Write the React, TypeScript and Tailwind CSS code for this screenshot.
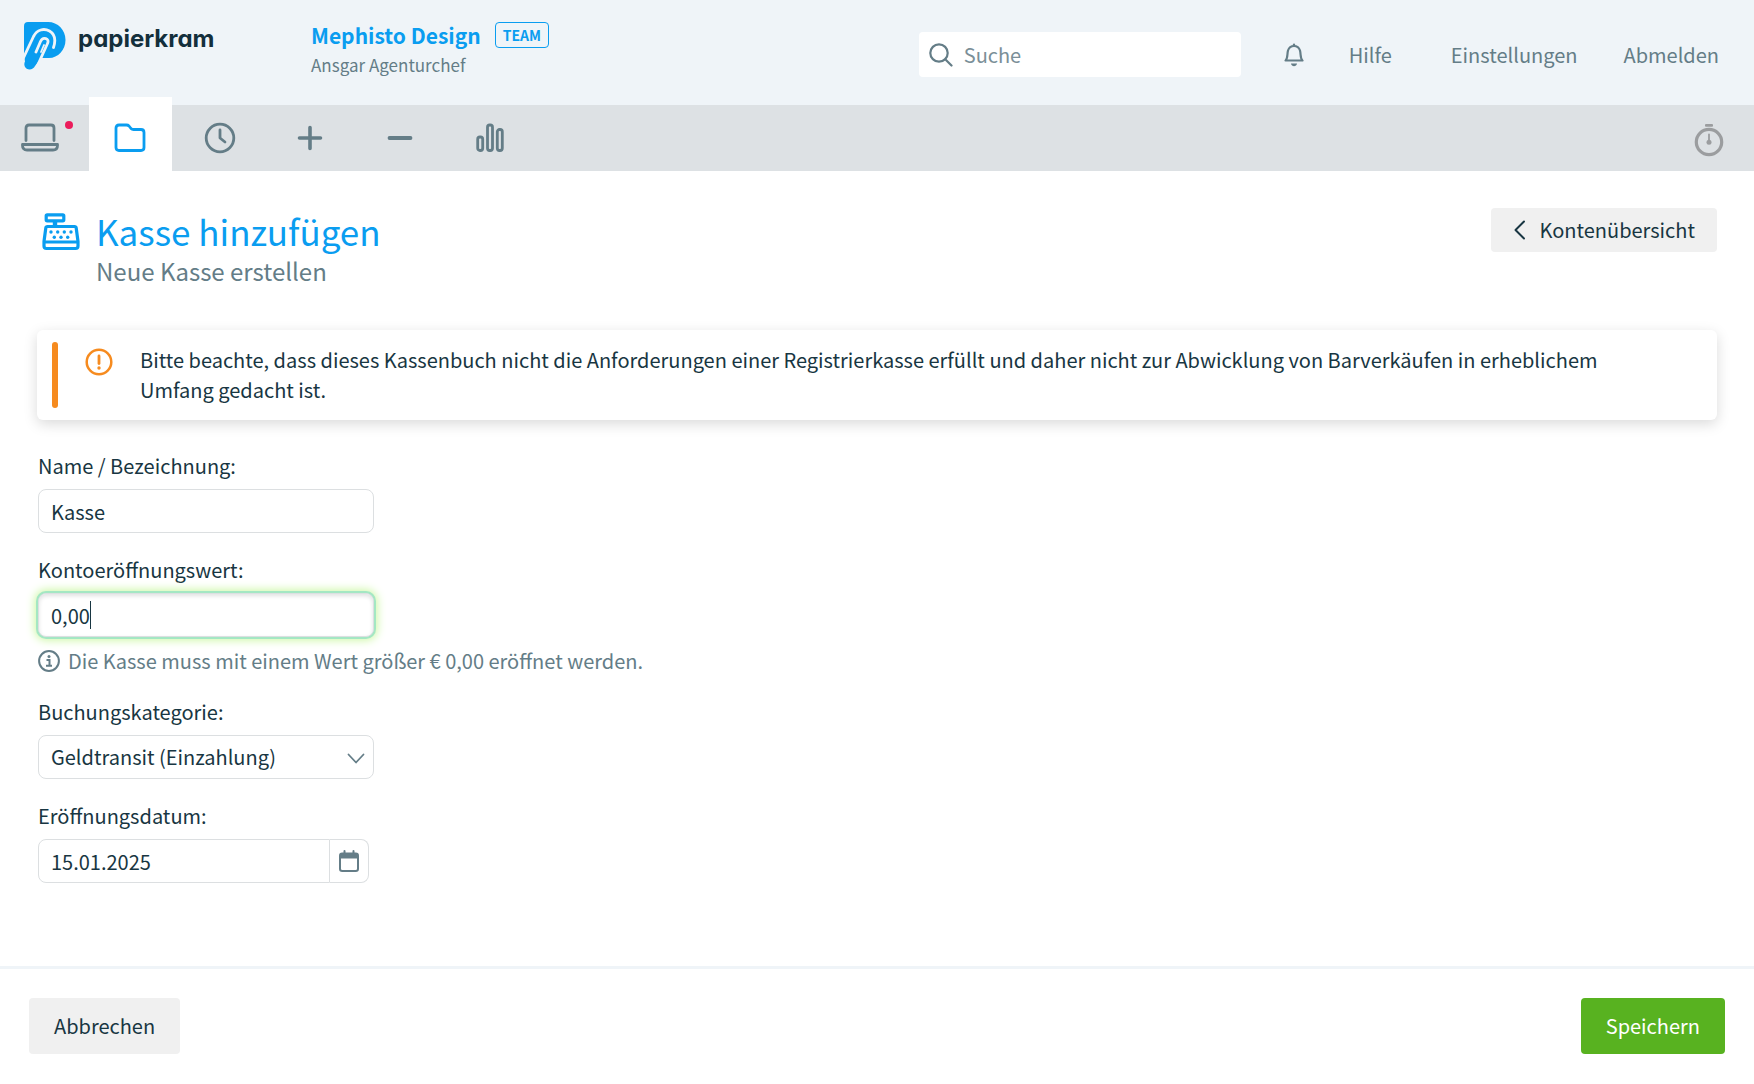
import React, { useEffect, useRef, useState } from "react";

const line = {
  fill: "none",
  stroke: "currentColor",
  strokeLinecap: "round" as const,
  strokeLinejoin: "round" as const,
  "aria-hidden": true,
};

function LogoMark() {
  return (
    <svg width="42" height="48" viewBox="0 0 42 48" aria-hidden="true">
      <path
        d="M4 0H24C34 0 41.500 8 41.500 18S34 36 25 36H17L11 44C9 48.500 2.500 48.500 .8 44.500C0 42.500 .3 41 1 39.500L0 33V4Q0 0 4 0Z"
        fill="#0a9df0"
      />
      <g fill="none" stroke="#eff4f8" strokeWidth="2.8" strokeLinecap="round">
        <path d="M-2 39L9.500 14.500C13 7.500 20 6 25.500 9C30.500 12 32 18 29.500 25.500" />
        <path d="M12 30L16.500 19.500C19 14 26 16.500 23.500 21.500L12 47" />
        <path d="M17 30L20 23" strokeWidth="1.800" />
      </g>
    </svg>
  );
}

function LaptopIcon() {
  return (
    <svg width="38" height="30" viewBox="0 0 38 30" strokeWidth="2.8" {...line}>
      <path d="M5 17.500V5Q5 2 8 2H30Q33 2 33 5V17.500" />
      <path d="M1.500 21.500H36.500V22.500Q36.500 27 32 27H6Q1.500 27 1.500 22.500Z" />
    </svg>
  );
}

function FolderIcon() {
  return (
    <svg width="32" height="30" viewBox="0 0 32 30" strokeWidth="2.8" {...line}>
      <path d="M2 5Q2 2 5 2H12.500Q14 2 15 3L17 5.500Q18 6.500 19.500 6.500H27Q30 6.500 30 9.500V24.500Q30 27.500 27 27.500H5Q2 27.500 2 24.500Z" />
    </svg>
  );
}

function ClockIcon() {
  return (
    <svg width="32" height="32" viewBox="0 0 32 32" strokeWidth="2.8" {...line}>
      <circle cx="16" cy="16" r="13.800" />
      <path d="M16 8V16L21 20" />
    </svg>
  );
}

function PlusIcon() {
  return (
    <svg width="26" height="26" viewBox="0 0 26 26" strokeWidth="3.6" {...line}>
      <path d="M2.500 13H23.500M13 2.500V23.500" />
    </svg>
  );
}

function MinusIcon() {
  return (
    <svg width="26" height="26" viewBox="0 0 26 26" strokeWidth="3.800" {...line}>
      <path d="M2.500 13H23.500" />
    </svg>
  );
}

function BarsIcon() {
  return (
    <svg width="28" height="30" viewBox="0 0 28 30" strokeWidth="2.8" {...line}>
      <rect x="1.700" y="14" width="5" height="13.500" rx="2.200" />
      <rect x="11.500" y="2" width="5" height="25.500" rx="2.200" />
      <rect x="21.300" y="6.500" width="5" height="21" rx="2.200" />
    </svg>
  );
}

function StopwatchIcon() {
  return (
    <svg width="30" height="34" viewBox="0 0 30 34" aria-hidden="true">
      <rect x="11" y="1" width="8" height="2.800" rx="1" fill="#9b9d9f" />
      <circle cx="15" cy="19" r="12.700" fill="none" stroke="#9b9d9f" strokeWidth="3.200" />
      <path d="M15 11.500V19" stroke="#9b9d9f" strokeWidth="1.800" strokeLinecap="round" />
      <circle cx="15" cy="19.300" r="2.500" fill="#9b9d9f" />
    </svg>
  );
}

function SearchIcon() {
  return (
    <svg width="24" height="24" viewBox="0 0 24 24" strokeWidth="2.2" {...line}>
      <circle cx="10" cy="10" r="8.700" />
      <path d="M16.500 16.500L22.500 22.500" />
    </svg>
  );
}

function BellIcon() {
  return (
    <svg width="20" height="24" viewBox="0 0 20 24" strokeWidth="2.2" {...line}>
      <path d="M1.500 17.500C4 15.500 3 11 4 7.500C5 4.500 7.500 3 10 3S15 4.500 16 7.500C17 11 16 15.500 18.500 17.500Z" />
      <path d="M10 1.500V3" />
      <path d="M7 20.500H13C12.500 24 7.500 24 7 20.500Z" fill="currentColor" stroke="none" />
    </svg>
  );
}

function RegisterIcon() {
  return (
    <svg width="38" height="38" viewBox="0 0 38 38" aria-hidden="true">
      <g fill="none" stroke="#0a9df0" strokeWidth="3.2" strokeLinejoin="round">
        <rect x="4.200" y="1.800" width="17.600" height="6" rx="1" />
        <path d="M13 8V13" strokeWidth="4.400" />
        <path d="M5.500 13.500H32.500Q34 13.500 34.200 15L36 28.500V33Q36 35.500 33.500 35.500H4.500Q2 35.500 2 33V28.500L3.800 15Q4 13.500 5.500 13.500Z" />
        <path d="M2 29H36" strokeWidth="3" />
      </g>
      <g fill="#0a9df0">
        <circle cx="9" cy="19" r="1.700" />
        <circle cx="15.700" cy="19" r="1.700" />
        <circle cx="22.300" cy="19" r="1.700" />
        <circle cx="29" cy="19" r="1.700" />
        <circle cx="12.300" cy="24.200" r="1.700" />
        <circle cx="19" cy="24.200" r="1.700" />
        <circle cx="25.700" cy="24.200" r="1.700" />
      </g>
    </svg>
  );
}

function WarningIcon() {
  return (
    <svg width="28" height="28" viewBox="0 0 28 28" aria-hidden="true">
      <circle cx="14" cy="14" r="12.300" fill="none" stroke="#f68b1f" strokeWidth="2.500" />
      <path d="M14 8V15.500" stroke="#f68b1f" strokeWidth="2.800" strokeLinecap="round" />
      <circle cx="14" cy="20" r="1.700" fill="#f68b1f" />
    </svg>
  );
}

function InfoIcon() {
  return (
    <svg width="22" height="22" viewBox="0 0 22 22" aria-hidden="true">
      <circle cx="11" cy="11" r="9.900" fill="none" stroke="currentColor" strokeWidth="2" />
      <circle cx="11" cy="6.600" r="1.500" fill="currentColor" />
      <path d="M8.500 10H11.500V15.500M8 15.800H14" fill="none" stroke="currentColor" strokeWidth="2" />
    </svg>
  );
}

function CalendarIcon() {
  return (
    <svg width="20" height="22" viewBox="0 0 20 22" aria-hidden="true">
      <rect x="1" y="3.500" width="18" height="17.500" rx="2.200" fill="none" stroke="currentColor" strokeWidth="2" />
      <path d="M1 4H19V8.500H1Z" fill="currentColor" />
      <path d="M5.500 1V5M14.500 1V5" stroke="currentColor" strokeWidth="2" strokeLinecap="round" />
    </svg>
  );
}

const tabs = [
  { label: "Übersicht", icon: <LaptopIcon />, notice: true },
  { label: "Projekte", icon: <FolderIcon />, active: true },
  { label: "Zeiterfassung", icon: <ClockIcon /> },
  { label: "Einnahmen", icon: <PlusIcon /> },
  { label: "Ausgaben", icon: <MinusIcon /> },
  { label: "Auswertungen", icon: <BarsIcon /> },
];

function Header() {
  return (
    <header className="flex h-[105px] items-start bg-[#eff4f8] pr-[35px] pl-6 text-[#647d87]">
      <a href="#" className="flex w-[287px] shrink-0 gap-3 pt-[22px]">
        <LogoMark />
        <span className="pt-px font-[family-name:Inter] text-2xl leading-8 font-bold text-[#132f3c] [font-feature-settings:'cv11']">
          papierkram
        </span>
      </a>
      <div className="pt-5">
        <div className="flex items-center gap-[14px]">
          <a href="#" className="text-[21px] leading-[30px] font-bold text-[#0a9df0]">
            Mephisto Design
          </a>
          <span className="rounded border border-[#0a9df0] px-[7px] text-sm leading-6 font-bold text-[#0a9df0]">
            TEAM
          </span>
        </div>
        <div className="text-[17px] leading-[30px]">Ansgar Agenturchef</div>
      </div>
      <form className="mt-8 ml-auto flex h-[45px] w-[322px] items-center gap-[11px] rounded bg-white px-2.5">
        <label htmlFor="search" aria-label="Suche">
          <SearchIcon />
        </label>
        <input
          id="search"
          placeholder="Suche"
          className="min-w-0 flex-1 bg-transparent outline-none placeholder:text-[#7b8f98]"
        />
      </form>
      <div className="mt-[42px] flex leading-[26px]">
        <button aria-label="Benachrichtigungen" className="mr-[45px] ml-[43px]">
          <BellIcon />
        </button>
        <a href="#" className="mr-[59px]">Hilfe</a>
        <a href="#" className="mr-[46px]">Einstellungen</a>
        <a href="#">Abmelden</a>
      </div>
    </header>
  );
}

function TabBar() {
  return (
    <nav className="flex h-[66px] items-end bg-[#dde1e4] pr-[30px] text-[#647d87]">
      <ul className="flex items-end gap-[7px]">
        {tabs.map((tab) => (
          <li key={tab.label} className={tab.notice ? "w-[82px]" : "w-[83px]"}>
            <a
              href="#"
              aria-label={tab.label}
              className={
                tab.active
                  ? "flex h-[74px] items-center justify-center bg-white pt-2 pr-0.5 text-[#0a9df0]"
                  : "relative flex h-[66px] items-center justify-center pr-0.5"
              }
            >
              {tab.icon}
              {tab.notice && <span className="absolute top-4 right-[9px] size-2 rounded-full bg-[#eb1c5b]" />}
            </a>
          </li>
        ))}
      </ul>
      <button aria-label="Stoppuhr" className="mb-[14px] ml-auto">
        <StopwatchIcon />
      </button>
    </nav>
  );
}

const field = "h-11 rounded-lg border border-[#dcdfe1] bg-white px-3";

export default function App() {
  const amount = useRef<HTMLInputElement>(null);
  const [value, setValue] = useState("0,00");
  useEffect(() => amount.current?.focus(), []);

  return (
    <div className="flex min-h-screen flex-col bg-white font-['Noto_Sans_CJK_SC',sans-serif] text-xl leading-[30px] text-[#183642]">
      <Header />
      <TabBar />
      <main className="flex-1 px-[37px] pt-[37px]">
        <div className="flex items-start">
          <div className="flex gap-4 pl-[5px]">
            <div className="pt-[5px]">
              <RegisterIcon />
            </div>
            <div>
              <h1 className="text-[35px] leading-[46px] text-[#0a9df0]">Kasse hinzufügen</h1>
              <p className="text-2xl leading-[34px] text-[#647d87]">Neue Kasse erstellen</p>
            </div>
          </div>
          <a href="#" className="ml-auto flex h-11 items-center gap-[13px] rounded bg-[#f0f0f0] px-[22px]">
            <svg width="13" height="20" viewBox="0 0 13 20" strokeWidth="2" {...line}>
              <path d="M11 1.500L2.500 10L11 18.500" />
            </svg>
            Kontenübersicht
          </a>
        </div>

        <div
          role="alert"
          className="mt-[42px] flex rounded-md bg-white py-3 pr-[90px] pl-[15px] shadow-[0_4px_14px_rgba(0,0,0,0.15)]"
        >
          <div className="w-1.5 shrink-0 rounded-sm bg-[#f68b1f]" />
          <div className="shrink-0 px-[27px] pt-1.5">
            <WarningIcon />
          </div>
          <p className="py-[3px]">
            Bitte beachte, dass dieses Kassenbuch nicht die Anforderungen einer Registrierkasse erfüllt und daher
            nicht zur Abwicklung von Barverkäufen in erheblichem Umfang gedacht ist.
          </p>
        </div>

        <form id="cash" className="mt-[31px] flex flex-col gap-[22px] pl-px">
          <div className="flex flex-col items-start gap-2">
            <label htmlFor="name">Name / Bezeichnung:</label>
            <input id="name" defaultValue="Kasse" className={`${field} w-[336px]`} />
          </div>
          <div className="flex flex-col items-start">
            <label htmlFor="amount">Kontoeröffnungswert:</label>
            <div className="relative mt-2">
              <input
                id="amount"
                ref={amount}
                value={value}
                onChange={(e) => setValue(e.target.value)}
                className={`${field} peer block w-[336px] outline-none focus:shadow-[0_0_0_2px_#a4e7c3,0_0_10px_3px_#c9f79f,inset_0_2px_4px_rgba(0,0,0,0.12)]`}
              />
              {value === "0,00" && (
                <span className="absolute top-2 left-[52px] hidden h-7 w-px bg-[#183642] peer-focus:block" />
              )}
            </div>
            <p className="mt-2.5 flex items-center gap-2 leading-7 text-[#647d87]">
              <InfoIcon />
              Die Kasse muss mit einem Wert größer € 0,00 eröffnet werden.
            </p>
          </div>
          <div className="flex flex-col items-start gap-2">
            <label htmlFor="category">Buchungskategorie:</label>
            <div className="relative">
              <select id="category" className={`${field} w-[336px] appearance-none`}>
                <option>Geldtransit (Einzahlung)</option>
              </select>
              <svg
                width="18"
                height="12"
                viewBox="0 0 18 12"
                strokeWidth="1.8"
                {...line}
                className="pointer-events-none absolute top-[18px] right-[9px] text-[#647d87]"
              >
                <path d="M1.500 1.500L9 9.500L16.500 1.500" />
              </svg>
            </div>
          </div>
          <div className="flex flex-col items-start gap-2">
            <label htmlFor="date">Eröffnungsdatum:</label>
            <div className="flex">
              <input id="date" defaultValue="15.01.2025" className={`${field} w-[292px] rounded-r-none`} />
              <button
                type="button"
                aria-label="Kalender öffnen"
                className="flex h-11 w-[39px] items-center justify-center rounded-r-lg border border-l-0 border-[#dcdfe1] text-[#647d87]"
              >
                <CalendarIcon />
              </button>
            </div>
          </div>
        </form>
      </main>
      <footer className="flex justify-between border-t-3 border-[#eff4f8] px-[29px] pt-[29px] pb-[30px]">
        <button className="h-14 rounded bg-[#f0f0f0] px-[25px]">Abbrechen</button>
        <button form="cash" type="button" className="h-14 rounded bg-[#58b220] px-[25px] text-white">
          Speichern
        </button>
      </footer>
    </div>
  );
}
